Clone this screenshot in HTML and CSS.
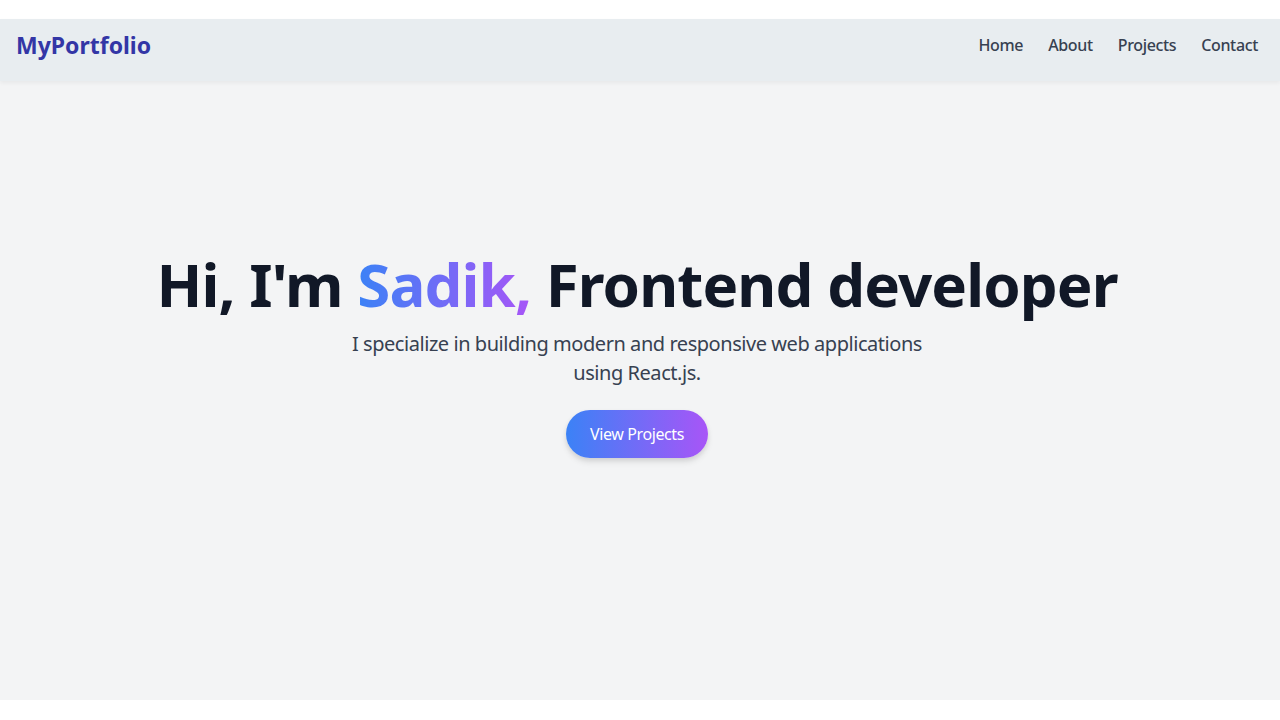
FILE: index.html
```html
<!DOCTYPE html>
<html lang="en">
<head>
<meta charset="utf-8">
<title>MyPortfolio</title>
<link rel="stylesheet" href="styles.css">
</head>
<body>
<div class="page">
  <nav class="navbar">
    <a class="logo" href="#">MyPortfolio</a>
    <ul class="nav-links">
      <li><a href="#">Home</a></li>
      <li><a href="#">About</a></li>
      <li><a href="#">Projects</a></li>
      <li><a href="#">Contact</a></li>
    </ul>
  </nav>
  <section class="hero">
    <h1 class="hero-title">Hi, I'm <span class="gradient-text">Sadik,</span> Frontend developer</h1>
    <p class="hero-sub">I specialize in building modern and responsive web applications using React.js.</p>
    <a class="btn" href="#">View Projects</a>
  </section>
</div>
</body>
</html>
```
FILE: styles.css
```css
* { box-sizing: border-box; }
html, body { margin: 0; padding: 0; background: #ffffff; }
body { font-family: "Noto Sans", "Open Sans", sans-serif; }
.page { padding-top: 19px; }
.navbar {
  height: 62px;
  background: #e8edf0;
  display: flex;
  align-items: center;
  justify-content: space-between;
  padding: 0 22px 10px 16px;
  box-shadow: 0 2px 4px rgba(0,0,0,0.05);
  position: relative;
  z-index: 1;
}
.logo {
  color: #3336a6;
  font-size: 23px;
  font-weight: 700;
  text-decoration: none;
}
.nav-links {
  list-style: none;
  margin: 0;
  padding: 0;
  display: flex;
  gap: 25px;
}
.nav-links a {
  color: #374151;
  font-size: 16px;
  font-weight: 500;
  letter-spacing: -0.35px;
  text-decoration: none;
}
.hero {
  height: 619px;
  background: #f3f4f5;
  display: flex;
  flex-direction: column;
  align-items: center;
  padding: 173px 6px 0 0;
  text-align: center;
}
.hero-title {
  margin: 0 0 15px;
  font-size: 60px;
  line-height: 60px;
  font-weight: 700;
  letter-spacing: -0.9px;
  color: #111827;
}
.gradient-text {
  background: linear-gradient(90deg, #3b82f6, #a855f7);
  -webkit-background-clip: text;
  background-clip: text;
  color: transparent;
}
.hero-sub {
  margin: 0;
  max-width: 580px;
  font-size: 20px;
  line-height: 29px;
  letter-spacing: -0.45px;
  color: #374151;
}
.btn {
  margin-top: 23px;
  display: inline-block;
  padding: 12px 24px;
  border-radius: 9999px;
  background: linear-gradient(90deg, #3b82f6, #a855f7);
  color: #ffffff;
  font-size: 16px;
  line-height: 24px;
  letter-spacing: -0.4px;
  text-decoration: none;
  box-shadow: 0 4px 6px rgba(0,0,0,0.1), 0 2px 4px rgba(0,0,0,0.06);
}
```
